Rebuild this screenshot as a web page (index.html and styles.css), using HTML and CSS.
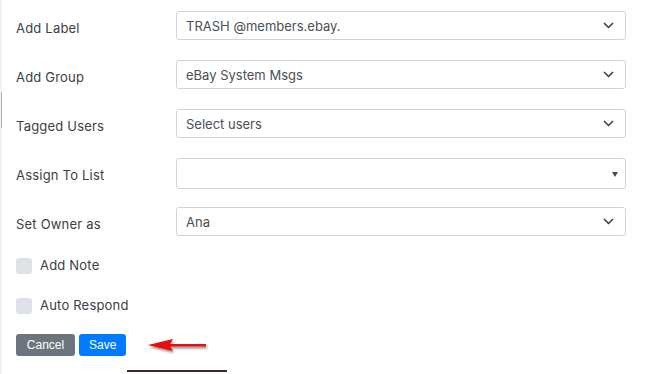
FILE: index.html
```html
<!DOCTYPE html>
<html lang="en">
<head>
    <meta charset="UTF-8">
    <meta name="viewport" content="width=device-width, initial-scale=1.0">
    <title>Rule Actions</title>
    <link rel="stylesheet" href="styles.css">
</head>
<body>
    <div class="page">
        <div class="scroll-thumb"></div>

        <form class="rule-form">
            <!-- Add Label -->
            <div class="form-row">
                <label class="form-label">Add Label</label>
                <div class="select-box">
                    <span class="select-value">TRASH @members.ebay.</span>
                    <svg class="chevron" width="11" height="7" viewBox="0 0 11 7"><polyline points="1,1 5.5,5.5 10,1" fill="none" stroke="#343a40" stroke-width="1.5"/></svg>
                </div>
            </div>

            <!-- Add Group -->
            <div class="form-row">
                <label class="form-label">Add Group</label>
                <div class="select-box">
                    <span class="select-value">eBay System Msgs</span>
                    <svg class="chevron" width="11" height="7" viewBox="0 0 11 7"><polyline points="1,1 5.5,5.5 10,1" fill="none" stroke="#343a40" stroke-width="1.5"/></svg>
                </div>
            </div>

            <!-- Tagged Users -->
            <div class="form-row">
                <label class="form-label">Tagged Users</label>
                <div class="select-box">
                    <span class="select-value">Select users</span>
                    <svg class="chevron" width="11" height="7" viewBox="0 0 11 7"><polyline points="1,1 5.5,5.5 10,1" fill="none" stroke="#343a40" stroke-width="1.5"/></svg>
                </div>
            </div>

            <!-- Assign To List -->
            <div class="form-row">
                <label class="form-label">Assign To List</label>
                <div class="select-box select-box--plain">
                    <span class="select-value"></span>
                    <span class="caret"></span>
                </div>
            </div>

            <!-- Set Owner -->
            <div class="form-row">
                <label class="form-label">Set Owner as</label>
                <div class="select-box">
                    <span class="select-value">Ana</span>
                    <svg class="chevron" width="11" height="7" viewBox="0 0 11 7"><polyline points="1,1 5.5,5.5 10,1" fill="none" stroke="#343a40" stroke-width="1.5"/></svg>
                </div>
            </div>

            <label class="check-row check-row--first">
                <span class="check-box"></span>
                <span class="check-label">Add Note</span>
            </label>

            <label class="check-row">
                <span class="check-box"></span>
                <span class="check-label">Auto Respond</span>
            </label>

            <div class="actions">
                <button type="button" class="btn btn-cancel">Cancel</button>
                <button type="button" class="btn btn-save">Save</button>
                <svg class="pointer" width="66" height="18" viewBox="0 0 66 18">
                    <defs>
                        <filter id="shadow" x="-20%" y="-50%" width="140%" height="200%">
                            <feDropShadow dx="1" dy="2" stdDeviation="1.3" flood-color="#000" flood-opacity="0.45"/>
                        </filter>
                    </defs>
                    <g filter="url(#shadow)">
                        <polygon points="2,8 27,2 24,7 60,7 60,9.5 24,9.5 27,14" fill="#e8070b"/>
                    </g>
                </svg>
            </div>

            <div class="bottom-rule"></div>
        </form>
    </div>
</body>
</html>
```

FILE: styles.css
```css
body {
    margin: 0;
    font-family: Inter, "Open Sans", sans-serif;
    background-color: #fff;
    overflow: hidden;
}

.page {
    position: relative;
    height: 374px;
    border-left: 2px solid #f1f2f4;
    box-sizing: border-box;
}

.scroll-thumb {
    position: absolute;
    left: -1px;
    top: 92px;
    width: 1px;
    height: 36px;
    background: #a9b1bb;
}

.rule-form {
    padding: 11px 21px 0 14px;
}

.form-row {
    display: flex;
    align-items: center;
    height: 29px;
    margin-bottom: 20px;
}

.form-label {
    width: 160px;
    flex-shrink: 0;
    padding-top: 4px;
    font-size: 13px;
    letter-spacing: 0.2px;
    color: #3a4046;
}

.select-box {
    flex: 1;
    height: 29px;
    box-sizing: border-box;
    border: 1px solid #ced4da;
    border-radius: 3px;
    display: flex;
    align-items: center;
    justify-content: space-between;
    padding: 0 11px 0 9px;
}

.select-box--plain {
    height: 31px;
    margin: 0 0 -2px;
    padding-right: 7px;
}

.select-value {
    font-size: 13px;
    color: #495057;
}

.chevron {
    display: block;
}

.caret {
    width: 0;
    height: 0;
    border-left: 3.5px solid transparent;
    border-right: 3.5px solid transparent;
    border-top: 5px solid #444a50;
    margin-top: 1px;
}

.check-row {
    display: flex;
    align-items: center;
    gap: 8px;
    margin-top: 22px;
}

.check-row--first {
    margin-top: 2px;
}

.check-box {
    width: 16px;
    height: 16px;
    background: #dee2e6;
    border-radius: 3px;
    margin-top: 2px;
}

.check-label {
    font-size: 13px;
    letter-spacing: 0.2px;
    color: #3a4046;
}

.actions {
    display: flex;
    align-items: center;
    gap: 4px;
    margin-top: 20px;
}

.btn {
    height: 22px;
    border: none;
    border-radius: 3px;
    color: #fff;
    font-family: "Liberation Sans", Arial, sans-serif;
    font-size: 12px;
    padding: 0 10px;
    cursor: pointer;
}

.btn-cancel {
    width: 59px;
    background: #6c757d;
}

.btn-save {
    width: 47px;
    background: #007bff;
}

.pointer {
    margin-left: 16px;
    margin-top: 2px;
}

.bottom-rule {
    margin: 14px 0 0 111px;
    width: 100px;
    height: 2px;
    background: #3d2b2b;
}
```
